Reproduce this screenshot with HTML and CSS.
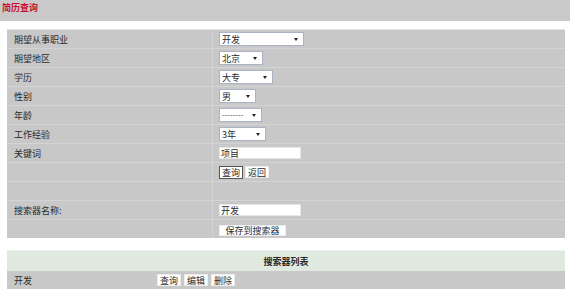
FILE: index.html
```html
<!DOCTYPE html>
<html lang="zh">
<head>
<meta charset="utf-8">
<title>简历查询</title>
<link rel="stylesheet" href="styles.css">
</head>
<body>
<div class="topbar"><span class="title">简历查询</span></div>

<div class="form">
  <div class="lbl">期望从事职业</div>
  <div class="val"><span class="sel w85">开发<i class="arr"></i></span></div>

  <div class="lbl">期望地区</div>
  <div class="val"><span class="sel w44">北京<i class="arr"></i></span></div>

  <div class="lbl">学历</div>
  <div class="val"><span class="sel w54">大专<i class="arr"></i></span></div>

  <div class="lbl">性别</div>
  <div class="val"><span class="sel w37">男<i class="arr"></i></span></div>

  <div class="lbl">年龄</div>
  <div class="val"><span class="sel w43"><span class="dash">--------</span><i class="arr"></i></span></div>

  <div class="lbl">工作经验</div>
  <div class="val"><span class="sel w47">3年<i class="arr"></i></span></div>

  <div class="lbl">关键词</div>
  <div class="val"><span class="inp">项目</span></div>

  <div class="lbl"></div>
  <div class="val btns"><span class="btn focus">查询</span><span class="btn">返回</span></div>

  <div class="lbl"></div>
  <div class="val"></div>

  <div class="lbl">搜索器名称:</div>
  <div class="val"><span class="inp">开发</span></div>

  <div class="lbl"></div>
  <div class="val"><span class="btn save">保存到搜索器</span></div>
</div>

<div class="list">
  <div class="list-head">搜索器列表</div>
  <div class="list-row">
    <div class="name">开发</div>
    <div class="ops"><span class="btn">查询</span><span class="btn">编辑</span><span class="btn">删除</span></div>
  </div>
</div>
</body>
</html>
```

FILE: styles.css
```css
html, body {
  margin: 0;
  padding: 0;
  background: #ffffff;
  font-family: "Noto Sans CJK SC", "DejaVu Sans", sans-serif;
  font-size: 9px;
  color: #2a2a2a;
}

.topbar {
  height: 21px;
  background: #c9c9c9;
  display: flex;
  align-items: center;
  padding-left: 2px;
  margin-bottom: 8px;
}

.title {
  color: #c8102e;
  font-weight: bold;
  font-size: 9px;
  position: relative;
  top: -3px;
}

.form {
  margin: 0 5px 0 7px;
  display: grid;
  grid-template-columns: 205px 1fr;
  grid-auto-rows: 18px;
  gap: 1px;
  background: #d4d4d4;
  border-top: 1px solid #e2e2e2;
}

.lbl, .val {
  background: #c8c8c8;
  display: flex;
  align-items: center;
}

.lbl {
  padding-left: 7px;
}

.val {
  padding-left: 6px;
}

.sel {
  height: 14px;
  box-sizing: border-box;
  background: #fff;
  border: 1px solid #a9b3c4;
  display: inline-flex;
  align-items: center;
  padding-left: 2px;
  position: relative;
  line-height: 1;
}

.w85 { width: 85px; }
.w44 { width: 44px; }
.w54 { width: 54px; }
.w37 { width: 37px; }
.w43 { width: 43px; }
.w47 { width: 47px; }

.dash {
  font-family: "Liberation Sans", sans-serif;
  font-size: 8px;
  letter-spacing: 0;
  color: #555;
}

.arr {
  position: absolute;
  right: 5px;
  top: 5px;
  width: 0;
  height: 0;
  border-left: 2.5px solid transparent;
  border-right: 2.5px solid transparent;
  border-top: 3px solid #222;
}

.inp {
  width: 82px;
  height: 12px;
  box-sizing: border-box;
  background: #fff;
  border: 1px solid #e6e6e6;
  display: inline-flex;
  align-items: center;
  padding-left: 1px;
  line-height: 1;
}

.btns {
  gap: 2px;
}

.btn {
  height: 12px;
  box-sizing: border-box;
  background: #fff;
  border: 1px solid #ececec;
  display: inline-flex;
  align-items: center;
  justify-content: center;
  padding: 0 2px;
  line-height: 1;
}

.btn.focus {
  border: 1px solid #555;
  height: 13px;
}

.btn.save {
  width: 67px;
  height: 11px;
  margin-top: 3px;
}

.list {
  margin: 12px 5px 0 7px;
}

.list-head {
  height: 20px;
  background: #dfe9df;
  display: flex;
  align-items: center;
  justify-content: center;
  font-weight: bold;
  border-top: 1px solid #eef3ee;
}

.list-row {
  height: 18px;
  background: #c8c8c8;
  display: flex;
  align-items: center;
}

.list-row .name {
  width: 150px;
  padding-left: 7px;
  box-sizing: border-box;
}

.list-row .ops {
  display: flex;
  gap: 3px;
}
```
